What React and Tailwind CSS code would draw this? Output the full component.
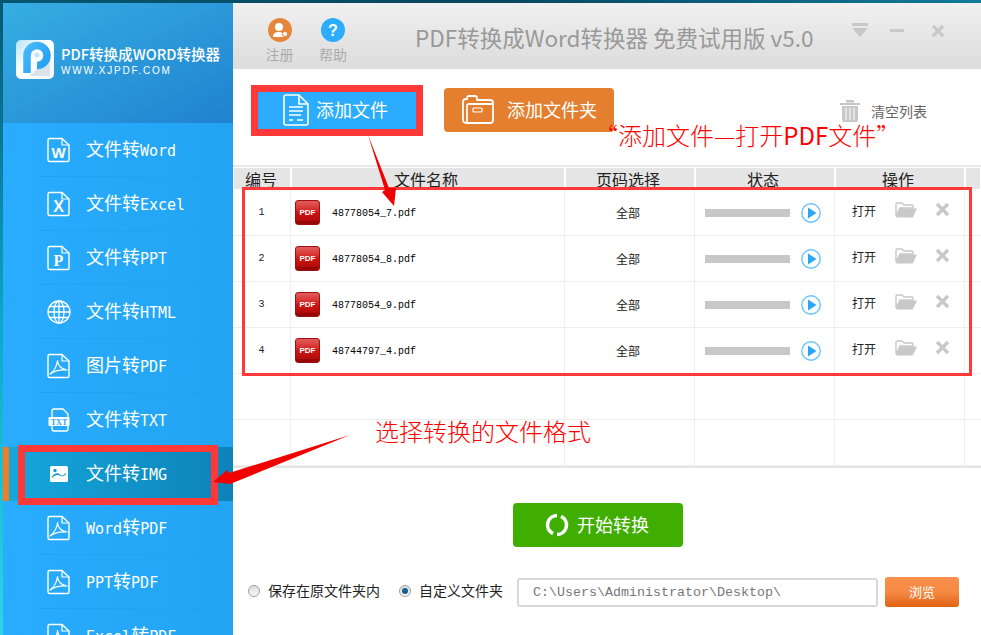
import React from 'react';

const cjk = '"Noto Sans CJK SC", sans-serif';

// Latin runs in the app's labels are narrower than the CJK glyphs
const Mixed = ({ text }) => (
  <>
    {text.split(/([A-Za-z]+)/).map((part, i) =>
      /[A-Za-z]/.test(part)
        ? <span key={i} className="font-['DejaVu_Sans_Mono',monospace] text-[15px]">{part}</span>
        : <span key={i}>{part}</span>
    )}
  </>
);

const DocShape = ({ children }) => (
  <svg width="24" height="26" viewBox="0 0 24 26" fill="none">
    <path d="M2.5 1.5H15L22 8V23a1.5 1.5 0 0 1-1.5 1.5h-18A1.5 1.5 0 0 1 1 23V3a1.5 1.5 0 0 1 1.5-1.5Z" stroke="#fff" strokeWidth="1.4" />
    <path d="M15 1.5V8H22" stroke="#fff" strokeWidth="1.2" />
    {children}
  </svg>
);

const LetterDoc = ({ letter, size = 15, serif = false }) => (
  <DocShape>
    <text x="11.5" y="21" textAnchor="middle" fontSize={size} fontWeight="700" fill="#fff"
      fontFamily={serif ? 'Liberation Serif, serif' : 'Liberation Sans, sans-serif'}>{letter}</text>
  </DocShape>
);

const AcrobatDoc = () => (
  <DocShape>
    <path d="M3 21C7 18 10 13 10.5 7.5C10.8 12 14 16.5 20 17C15 16.5 8 17.5 3 21Z" stroke="#fff" strokeWidth="1.2" strokeLinejoin="round" />
  </DocShape>
);

const GlobeIcon = () => (
  <svg width="24" height="24" viewBox="0 0 24 24" fill="none" stroke="#fff" strokeWidth="1.3">
    <circle cx="12" cy="12" r="11" />
    <ellipse cx="12" cy="12" rx="5" ry="11" />
    <path d="M12 1V23M1 12H23M2.6 6.5H21.4M2.6 17.5H21.4" />
  </svg>
);

const TxtIcon = () => (
  <svg width="22" height="24" viewBox="0 0 22 24" fill="none">
    <path d="M4 9V3a2 2 0 0 1 2-2h9l5 5v3" stroke="#fff" strokeWidth="1.3" />
    <path d="M4 18v3a2 2 0 0 0 2 2h12a2 2 0 0 0 2-2v-3" stroke="#fff" strokeWidth="1.3" />
    <rect x="0.5" y="9" width="21" height="9" rx="1" fill="#fff" />
    <text x="11" y="16.5" textAnchor="middle" fontSize="8" fontWeight="700" fill="#2aa8f5" fontFamily="Liberation Serif, serif">TXT</text>
  </svg>
);

const ImageIcon = () => (
  <svg width="18" height="16" viewBox="0 0 18 16">
    <rect width="18" height="16" rx="1.5" fill="#fff" />
    <path d="M2 10.5C5 6.5 8 6.5 10 8.5S14.5 9 16 6.5V8C14 11 11.5 10.5 9.5 9.5S5 9 2 12Z" fill="#1199d0" />
    <circle cx="5" cy="4.5" r="1.7" fill="#1199d0" />
  </svg>
);

const LogoMark = () => (
  <svg width="38" height="39" viewBox="0 0 38 39">
    <defs>
      <linearGradient id="logoTile" x1="0" y1="0" x2="1" y2="1">
        <stop offset="0" stopColor="#b9e2f8" />
        <stop offset="0.45" stopColor="#ffffff" />
        <stop offset="1" stopColor="#f4f6f8" />
      </linearGradient>
      <linearGradient id="logoP" x1="0" y1="0" x2="1" y2="1">
        <stop offset="0" stopColor="#46b9fb" />
        <stop offset="1" stopColor="#1f9df2" />
      </linearGradient>
    </defs>
    <rect width="38" height="39" rx="5" fill="url(#logoTile)" />
    <path d="M22 26L34 14V36H14L20 30Z" fill="#d9e3ea" />
    <path d="M11 33V15.5a10 10 0 1 1 10 10" fill="none" stroke="url(#logoP)" strokeWidth="7.5" />
    <circle cx="21" cy="15" r="2.6" fill="#bfe6fb" />
  </svg>
);

const NAV = [
  { label: '文件转Word', icon: <LetterDoc letter="W" size={15} /> },
  { label: '文件转Excel', icon: <LetterDoc letter="X" size={16} /> },
  { label: '文件转PPT', icon: <LetterDoc letter="P" size={16} serif /> },
  { label: '文件转HTML', icon: <GlobeIcon /> },
  { label: '图片转PDF', icon: <AcrobatDoc /> },
  { label: '文件转TXT', icon: <TxtIcon /> },
  { label: '文件转IMG', icon: <ImageIcon />, active: true },
  { label: 'Word转PDF', icon: <AcrobatDoc /> },
  { label: 'PPT转PDF', icon: <AcrobatDoc /> },
  { label: 'Excel转PDF', icon: <AcrobatDoc /> },
];

const FILES = ['48778054_7.pdf', '48778054_8.pdf', '48778054_9.pdf', '48744797_4.pdf'];

const PdfIcon = () => (
  <div className="relative w-[25px] h-[25px] rounded-[3px] border border-[#a01010] bg-gradient-to-b from-[#e25a5a] via-[#d01414] to-[#a80808] flex items-center justify-center overflow-hidden">
    <span className="text-[8px] leading-none font-bold text-white font-['Liberation_Sans',sans-serif]">PDF</span>
    <span className="absolute left-0 right-0 bottom-0 h-[3px] bg-[#960808]" />
  </div>
);

const PlayIcon = () => (
  <svg width="20" height="20" viewBox="0 0 20 20">
    <circle cx="10" cy="10" r="9.2" fill="#fff" stroke="#6cc4fb" strokeWidth="1.4" />
    <path d="M7 4.5L15.5 10L7 15.5Z" fill="#2ba6f6" />
  </svg>
);

const FolderIcon = () => (
  <svg width="22" height="16" viewBox="0 0 22 16">
    <path d="M1 14V2a1 1 0 0 1 1-1h5l2 2h8a1 1 0 0 1 1 1v2H5L1 14Z" fill="none" stroke="#c8c8c8" strokeWidth="1.4" />
    <path d="M5 6.5H22L18 15a1 1 0 0 1-1 .5H1Z" fill="#c8c8c8" />
  </svg>
);

const CrossIcon = ({ size = 15, color = '#c8c8c8' }) => (
  <svg width={size} height={size} viewBox="0 0 15 15">
    <path d="M2 2L13 13M13 2L2 13" stroke={color} strokeWidth="3.4" />
  </svg>
);

const Annotations = () => (
  <>
    <div className="absolute left-[251px] top-[85px] w-[172px] h-[51px] border-[7px] border-[#ff3838]" />
    <div className="absolute left-[18px] top-[445px] w-[200px] h-[60px] border-[7px] border-[#ff3838]" />
    <div className="absolute left-[242px] top-[187px] w-[730px] h-[189px] border-[3px] border-[#ff3838]" />
    <svg className="absolute left-0 top-0 pointer-events-none" width="981" height="635">
      <polygon points="368,135 389,188 396,188 394,206 382,192 385,190" fill="#f00000" />
      <polygon points="350,435 240,480 230,484 213,482 227,470 229,473" fill="#f00000" />
    </svg>
    <div className="absolute left-[594px] top-[118px] text-[24px] leading-[34px] text-[#ff0000] whitespace-nowrap font-light" style={{ fontFamily: cjk }}>
      “添加文件—打开<span className="font-normal">PDF</span>文件”
    </div>
    <div className="absolute left-[375px] top-[414px] text-[24px] leading-[34px] text-[#ff0000] whitespace-nowrap font-light" style={{ fontFamily: cjk }}>
      选择转换的文件格式
    </div>
  </>
);

const Sidebar = () => (
  <aside className="w-[230px] shrink-0 flex flex-col">
    <div className="h-[120px] shrink-0 bg-gradient-to-br from-[#36aee3] to-[#2182d0] flex items-center pl-[13px] pb-[8px]">
      <LogoMark />
      <div className="ml-[7px] pt-[3px] text-white">
        <div className="text-[14.6px] leading-[18px] font-medium whitespace-nowrap" style={{ fontFamily: cjk }}>PDF转换成WORD转换器</div>
        <div className="text-[10px] leading-[12px] tracking-[1.8px] mt-[2px] font-['Liberation_Sans',sans-serif] whitespace-nowrap">WWW.XJPDF.COM</div>
      </div>
    </div>
    <nav className="flex-1 bg-gradient-to-r from-[#2aacff] to-[#21a4f2]">
      {NAV.map(item => (
        <div key={item.label} className={`relative h-[54px] flex items-center ${item.active ? 'bg-gradient-to-r from-[#16a8dd] to-[#0d82b9]' : ''}`}>
          {item.active && <span className="absolute left-0 top-0 bottom-0 w-[6px] bg-[#f07f22]" />}
          <div className="w-[83px] shrink-0 flex justify-center pl-[29px]">{item.icon}</div>
          <span className="text-[18px] leading-none text-white whitespace-nowrap pb-[2px]" style={{ fontFamily: cjk }}>
            <Mixed text={item.label} />
          </span>
          {!item.active && <span className="absolute left-[35px] w-[161px] bottom-0 h-px bg-[#24a2f2]" />}
        </div>
      ))}
    </nav>
  </aside>
);

const TitleBar = () => (
  <header className="h-[66px] shrink-0 bg-gradient-to-b from-[#f0f0f0] to-[#dcdcdc] flex items-start">
    <div className="w-[107px] ml-[20px] flex">
      <div className="w-[53px] flex flex-col items-center pt-[15px]">
        <svg width="24" height="24" viewBox="0 0 24 24">
          <circle cx="12" cy="12" r="12" fill="#e5873a" />
          <circle cx="11" cy="9" r="4" fill="#fff" />
          <path d="M5 19c0-4 3-5 6-5s4 1 4 2l1 3Z" fill="#fff" />
          <circle cx="17" cy="16" r="2.6" fill="#fff" stroke="#e5873a" />
        </svg>
        <span className="text-[14px] leading-[18px] mt-[3px] text-[#aaaaaa]" style={{ fontFamily: cjk }}>注册</span>
      </div>
      <div className="w-[54px] flex flex-col items-center pt-[15px]">
        <svg width="24" height="24" viewBox="0 0 24 24">
          <circle cx="12" cy="12" r="12" fill="#2bacff" />
          <text x="12" y="17.5" textAnchor="middle" fontSize="16" fontWeight="700" fill="#fff" fontFamily="Liberation Sans, sans-serif">?</text>
        </svg>
        <span className="text-[14px] leading-[18px] mt-[3px] text-[#aaaaaa]" style={{ fontFamily: cjk }}>帮助</span>
      </div>
    </div>
    <h1 className="ml-[55px] mt-[17px] text-[22.5px] leading-[34px] font-normal text-[#999999] whitespace-nowrap" style={{ fontFamily: cjk }}>
      PDF转换成Word转换器 免费试用版 v5.0
    </h1>
    <div className="ml-auto flex items-center mt-[20px] pr-[36px]">
      <svg width="16" height="15" viewBox="0 0 16 15">
        <path d="M0 0H16V3H0ZM0 5H16L8 14Z" fill="#c8c8c8" />
      </svg>
      <span className="ml-[22px] w-[14px] h-[3px] bg-[#c8c8c8]" />
      <span className="ml-[27px]"><CrossIcon size={14} /></span>
    </div>
  </header>
);

const Toolbar = () => (
  <div className="h-[96px] shrink-0 flex items-start pl-[24px] pt-[19px]">
    <button className="w-[166px] h-[44px] rounded-[3px] bg-[#2bacff] flex items-center pl-[26px] text-white">
      <svg width="26" height="32" viewBox="0 0 26 32" fill="none" stroke="#fff" strokeWidth="1.6">
        <path d="M3 1H16L25 10V29a2 2 0 0 1-2 2H3a2 2 0 0 1-2-2V3a2 2 0 0 1 2-2Z" />
        <path d="M16 1V10H25" />
        <path d="M6 13H20M6 17H20M6 21H18M6 26H10M14 26H20" />
      </svg>
      <span className="ml-[7px] pb-[2px] text-[18px] leading-none" style={{ fontFamily: cjk }}>添加文件</span>
    </button>
    <button className="ml-[21px] w-[170px] h-[44px] rounded-[4px] bg-[#e47f30] flex items-center pl-[18px] text-white">
      <svg width="32" height="30" viewBox="0 0 32 30" fill="none" stroke="#fff" strokeWidth="1.8">
        <path d="M1 25V7a3 3 0 0 1 3-3h1V3a2 2 0 0 1 2-2h6a2 2 0 0 1 2 2v2h13a3 3 0 0 1 3 3v17a3 3 0 0 1-3 3H4a3 3 0 0 1-3-3Z" />
        <path d="M5 28V11a2 2 0 0 1 2-2H31" />
        <rect x="11" y="13" width="9" height="4" rx="1" strokeWidth="1.2" />
      </svg>
      <span className="ml-[13px] pb-[2px] text-[18px] leading-none" style={{ fontFamily: cjk }}>添加文件夹</span>
    </button>
    <div className="ml-[226px] mt-[12px] flex items-center">
      <svg width="20" height="22" viewBox="0 0 20 22" fill="#c8c8c8">
        <path d="M0 3H20V5H0ZM6 0H14V2.5H6Z" />
        <path d="M2 6H18V20a2 2 0 0 1-2 2H4a2 2 0 0 1-2-2Z" />
        <path d="M6 8V20M10 8V20M14 8V20" stroke="#fff" strokeWidth="1" />
      </svg>
      <span className="ml-[11px] text-[14px] leading-none text-[#666666] whitespace-nowrap" style={{ fontFamily: cjk }}>清空列表</span>
    </div>
  </div>
);

const COLS = 'grid grid-cols-[58px_274px_130px_140px_130px_16px]';

const FileTable = () => (
  <section className="shrink-0 border-b-[2px] border-[#e4e4e4]">
    <div className={`${COLS} h-[25px] border-t-2 border-[#e8e8e8] text-[16px] text-[#222222]`} style={{ fontFamily: cjk }}>
      {['编号', '文件名称', '页码选择', '状态', '操作', ''].map((h, i) => (
        <div key={i} className={`bg-[#e5e5e5] border border-white flex items-center justify-center leading-none ${i > 0 ? 'pr-[4px]' : 'pr-[2px]'}`}>{h}</div>
      ))}
    </div>
    {[0, 1, 2, 3, 4, 5].map(i => {
      const name = FILES[i];
      return (
        <div key={i} className={`${COLS} h-[46px] border-b border-[#eeeeee]`}>
          <div className="border-r border-[#eeeeee] flex items-center justify-center text-[10px] text-[#222222] font-['Liberation_Mono',monospace]">{name ? i + 1 : ''}</div>
          <div className="border-r border-[#eeeeee] flex items-center pl-[4px]">
            {name && <PdfIcon />}
            {name && <span className="ml-[12px] pt-[1px] text-[10px] text-black font-['Liberation_Mono',monospace]">{name}</span>}
          </div>
          <div className="border-r border-[#eeeeee] flex items-center justify-center pr-[3px] text-[12px] text-[#222222]" style={{ fontFamily: cjk }}>{name && '全部'}</div>
          <div className="border-r border-[#eeeeee] flex items-center pl-[10px]">
            {name && <span className="w-[85px] h-[8px] bg-[#c8c8c8]" />}
            {name && <span className="ml-[11px] flex"><PlayIcon /></span>}
          </div>
          <div className="border-r border-[#eeeeee] flex items-start pt-[12px] pl-[17px]">
            {name && <span className="text-[12px] leading-[18px] text-[#222222] w-[43px]" style={{ fontFamily: cjk }}>打开</span>}
            {name && <FolderIcon />}
            {name && <span className="ml-[18px]"><CrossIcon /></span>}
          </div>
          <div />
        </div>
      );
    })}
  </section>
);

const Radio = ({ checked, label }) => (
  <label className="flex items-center">
    <span className="mb-[2px] w-[12px] h-[12px] rounded-full border border-[#a0a0a0] bg-gradient-to-b from-[#dddddd] to-[#f8f8f8] flex items-center justify-center">
      {checked && <span className="w-[6px] h-[6px] rounded-full bg-[#14608f]" />}
    </span>
    <span className="ml-[8px] pb-[3px] text-[14px] leading-none text-[#222222] whitespace-nowrap" style={{ fontFamily: cjk }}>{label}</span>
  </label>
);

const Footer = () => (
  <div className="flex-1 flex flex-col">
    <button className="mt-[35px] ml-[280px] w-[170px] h-[44px] rounded-[4px] bg-[#3fae00] flex items-center pl-[32px] text-white">
      <svg width="24" height="24" viewBox="0 0 24 24" fill="none" stroke="#fff" strokeWidth="3.6">
        <path d="M12 2.5A9.5 9.5 0 0 0 8 20.6" />
        <path d="M12 21.5A9.5 9.5 0 0 0 16 3.4" />
      </svg>
      <span className="ml-[8px] pb-[2px] text-[18px] leading-none" style={{ fontFamily: cjk }}>开始转换</span>
    </button>
    <div className="mt-[29px] flex items-center pl-[15px]">
      <Radio label="保存在原文件夹内" />
      <span className="w-[19px]" />
      <Radio checked label="自定义文件夹" />
      <div className="ml-[14px] mt-[2px] w-[361px] h-[29px] rounded-[3px] border-2 border-[#d8d8dc] flex items-center pl-[14px] text-[13.33px] text-[#777777] font-['Liberation_Mono',monospace]">
        C:\Users\Administrator\Desktop\
      </div>
      <button className="ml-[7px] w-[74px] h-[30px] rounded-[3px] bg-gradient-to-b from-[#f88f4b] via-[#f68a44] to-[#df620d] text-[13px] text-white" style={{ fontFamily: cjk }}>
        浏览
      </button>
    </div>
  </div>
);

export default function App() {
  return (
    <div className="relative w-[981px] h-[635px] overflow-hidden bg-gradient-to-r from-[#0a6f8e] to-[#0f7b9c]">
      <div className="absolute left-0 top-0 w-[3px] h-full bg-gradient-to-b from-[#07566f] via-[#0aa7c8] to-[#2ad6e8]" />
      <div className="absolute left-0 top-0 w-full h-[3px] bg-gradient-to-r from-[#07566f] via-[#07465f] to-[#127a9a]" />
      <div className="ml-[3px] pt-[3px] h-full flex">
        <Sidebar />
        <main className="flex-1 bg-white flex flex-col min-w-0">
          <TitleBar />
          <Toolbar />
          <FileTable />
          <Footer />
        </main>
      </div>
      <Annotations />
    </div>
  );
}
